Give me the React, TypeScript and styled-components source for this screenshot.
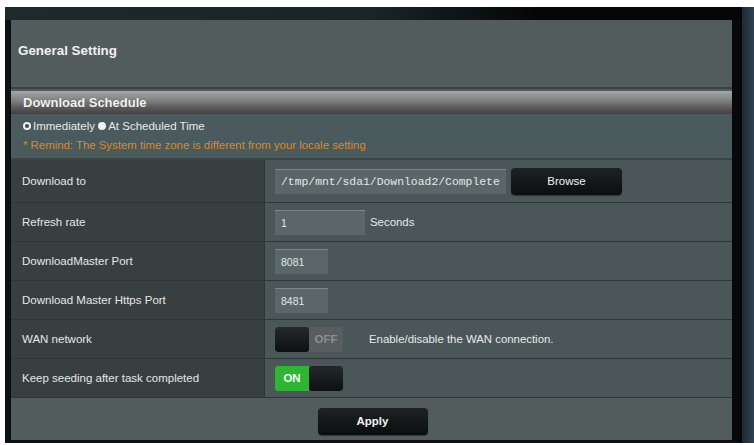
import React from "react";
import styled, { createGlobalStyle } from "styled-components";

const GlobalStyle = createGlobalStyle`
  html, body {
    margin: 0;
    padding: 0;
    background: #fff;
  }
  body {
    font-family: "Liberation Sans", Arial, sans-serif;
  }
`;

const Page = styled.div`
  width: 754px;
  height: 445px;
  padding: 7px 0 0 5px;
  box-sizing: border-box;
  display: flex;
  align-items: flex-start;
  overflow: hidden;
`;

const Frame = styled.div`
  width: 721px;
  border-left: 6px solid #0c1012;
  border-right: 10px solid #060809;
  border-bottom: 3px solid #0c1012;
  display: flex;
  flex-direction: column;
`;

const RightEdge = styled.div`
  width: 12px;
  height: 436px;
  background: linear-gradient(90deg, #1c2a34, #2f4150);
`;

const TopStrip = styled.div`
  height: 13px;
  margin-left: -6px;
  margin-right: -10px;
  background: linear-gradient(90deg, #1d292b 0%, #1a2426 50%, #050607 72%, #050607 100%);
`;

const Panel = styled.div`
  height: 420px;
  background: #535c5c;
  display: flex;
  flex-direction: column;
`;

const TitleArea = styled.div`
  height: 69px;
  padding-left: 7px;
  display: flex;
  align-items: center;
  border-bottom: 2px solid #3a4243;
  box-sizing: border-box;
`;

const Title = styled.span`
  color: #eef1f1;
  font-weight: bold;
  font-size: 13.4px;
  margin-top: -7px;
`;

const SectionBar = styled.div`
  height: 23px;
  margin-top: 2px;
  padding-left: 12px;
  display: flex;
  align-items: center;
  background: linear-gradient(180deg, #a3a8a8 0%, #7c7f80 45%, #5a5456 80%, #4a4446 100%);
  border-bottom: 1px solid #3d4446;
  box-sizing: border-box;
`;

const SectionTitle = styled.span`
  color: #f3f3f3;
  font-weight: bold;
  font-size: 13px;
  text-shadow: 0 0 1px rgba(0, 0, 0, 0.4);
`;

const Options = styled.div`
  height: 46px;
  background: #4b5a5c;
  padding: 4px 0 0 12px;
  box-sizing: border-box;
  border-bottom: 2px solid #3c4446;
  display: flex;
  flex-direction: column;
  gap: 6px;
`;

const RadioRow = styled.div`
  display: flex;
  align-items: center;
  color: #e6eaea;
  font-size: 11.5px;
  height: 15px;
`;

const Radio = styled.span<{ $checked?: boolean }>`
  width: 8px;
  height: 8px;
  border-radius: 50%;
  box-sizing: border-box;
  border: 2px solid #f2f2f2;
  background: ${({ $checked }) => ($checked ? "#f2f2f2" : "#3c4648")};
  margin-right: 2px;
  display: inline-block;
`;

const Remind = styled.div`
  color: #d88a2c;
  font-size: 11.4px;
`;

const Table = styled.div`
  display: flex;
  flex-direction: column;
`;

const Row = styled.div<{ $h: number }>`
  height: ${({ $h }) => $h}px;
  display: grid;
  grid-template-columns: 254px 1fr;
  border-bottom: 1px solid #2f3638;
  box-sizing: border-box;
`;

const Label = styled.div`
  background: #383f41;
  color: #e3e7e7;
  font-size: 11.5px;
  display: flex;
  align-items: center;
  padding-left: 11px;
  border-right: 1px solid #2f3638;
`;

const Value = styled.div`
  background: #4b5658;
  display: flex;
  align-items: center;
  padding-left: 10px;
  gap: 5px;
`;

const Input = styled.div<{ $w: number; $mono?: boolean }>`
  width: ${({ $w }) => $w}px;
  height: 25px;
  box-sizing: border-box;
  background: #5b6668;
  border-top: 1px solid #7d8789;
  color: #e2e7e7;
  font-size: ${({ $mono }) => ($mono ? "11.4px" : "10.5px")};
  font-family: ${({ $mono }) =>
    $mono ? '"Liberation Mono", "DejaVu Sans Mono", monospace' : '"Liberation Sans", Arial, sans-serif'};
  display: flex;
  align-items: center;
  padding-left: 6px;
  overflow: hidden;
  white-space: nowrap;
`;

const DarkButton = styled.div<{ $w: number; $bold?: boolean }>`
  width: ${({ $w }) => $w}px;
  height: 27px;
  border-radius: 4px;
  background: linear-gradient(180deg, #1d2224 0%, #0b0e0f 100%);
  color: #f2f2f2;
  font-size: 11.5px;
  font-weight: ${({ $bold }) => ($bold ? "bold" : "normal")};
  display: flex;
  align-items: center;
  justify-content: center;
  box-shadow: 0 1px 1px rgba(0, 0, 0, 0.4);
`;

const Hint = styled.span<{ $ml?: number }>`
  color: #e6eaea;
  font-size: 11.4px;
  margin-left: ${({ $ml }) => $ml ?? 0}px;
`;

const Toggle = styled.div`
  width: 68px;
  height: 25px;
  display: flex;
  border-radius: 3px;
  overflow: hidden;
`;

const Knob = styled.div`
  width: 34px;
  background: linear-gradient(180deg, #23292b, #0d1011);
  border-radius: 3px;
`;

const ToggleText = styled.div<{ $on?: boolean }>`
  flex: 1;
  display: flex;
  align-items: center;
  justify-content: center;
  font-size: 11.5px;
  font-weight: bold;
  background: ${({ $on }) => ($on ? "#2fb433" : "#585e60")};
  color: ${({ $on }) => ($on ? "#f4fff4" : "#8a9092")};
`;

const Footer = styled.div`
  flex: 1;
  display: flex;
  justify-content: center;
  align-items: center;
  padding-top: 4px;
  padding-left: 2px;
`;

export default function App() {
  return (
    <>
      <GlobalStyle />
      <Page>
        <Frame>
          <TopStrip />
          <Panel>
            <TitleArea>
              <Title>General Setting</Title>
            </TitleArea>
            <SectionBar>
              <SectionTitle>Download Schedule</SectionTitle>
            </SectionBar>
            <Options>
              <RadioRow>
                <Radio />
                Immediately&nbsp;
                <Radio $checked />
                At Scheduled Time
              </RadioRow>
              <Remind>* Remind: The System time zone is different from your locale setting</Remind>
            </Options>
            <Table>
              <Row $h={43}>
                <Label>Download to</Label>
                <Value>
                  <Input $w={231} $mono>
                    /tmp/mnt/sda1/Download2/Complete
                  </Input>
                  <DarkButton $w={111}>Browse</DarkButton>
                </Value>
              </Row>
              <Row $h={39}>
                <Label>Refresh rate</Label>
                <Value>
                  <Input $w={90}>1</Input>
                  <Hint>Seconds</Hint>
                </Value>
              </Row>
              <Row $h={39}>
                <Label>DownloadMaster Port</Label>
                <Value>
                  <Input $w={53}>8081</Input>
                </Value>
              </Row>
              <Row $h={39}>
                <Label>Download Master Https Port</Label>
                <Value>
                  <Input $w={53}>8481</Input>
                </Value>
              </Row>
              <Row $h={39}>
                <Label>WAN network</Label>
                <Value>
                  <Toggle>
                    <Knob />
                    <ToggleText>OFF</ToggleText>
                  </Toggle>
                  <Hint $ml={21}>Enable/disable the WAN connection.</Hint>
                </Value>
              </Row>
              <Row $h={39}>
                <Label>Keep seeding after task completed</Label>
                <Value>
                  <Toggle>
                    <ToggleText $on>ON</ToggleText>
                    <Knob />
                  </Toggle>
                </Value>
              </Row>
            </Table>
            <Footer>
              <DarkButton $w={110} $bold>
                Apply
              </DarkButton>
            </Footer>
          </Panel>
        </Frame>
        <RightEdge />
      </Page>
    </>
  );
}
